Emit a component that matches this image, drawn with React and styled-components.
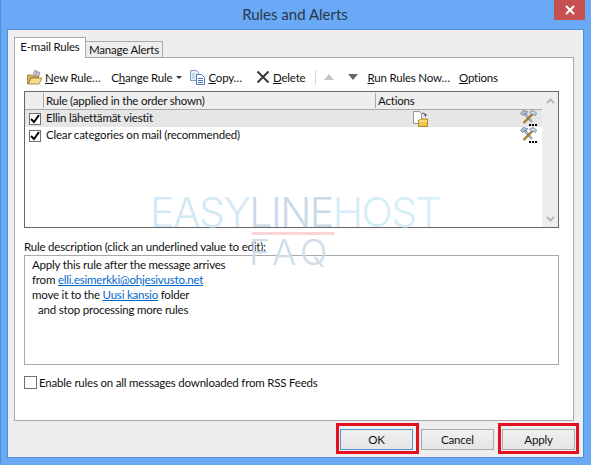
import React from "react";
import styled, { createGlobalStyle } from "styled-components";

const Global = createGlobalStyle`
  html, body { margin: 0; padding: 0; background: #69a9f5; overflow: hidden; }
  * { box-sizing: border-box; }
  u { text-underline-offset: 1px; text-decoration-thickness: 1px; }
`;

const Window = styled.div`
  position: relative;
  width: 591px;
  height: 465px;
  display: flex;
  flex-direction: column;
  background: #69a9f5;
  border-left: 1px solid #4f8fdc;
  font-family: Lato, "Open Sans", sans-serif;
  font-size: 11.5px;
  letter-spacing: -0.2px;
  color: #111;
`;
const TitleBar = styled.header`
  flex: 0 0 29px;
  display: grid;
  grid-template-columns: 1fr auto 1fr;
  align-items: start;
  padding-right: 6px;
`;
const Title = styled.div`
  grid-column: 2;
  font-size: 15px;
  letter-spacing: 0;
  line-height: 29px;
  color: #27384a;
  padding-left: 4px;
`;
const Close = styled.div`
  grid-column: 3;
  justify-self: end;
  width: 31px;
  height: 20px;
  background: #c75050;
  display: flex;
  align-items: center;
  justify-content: center;
`;
const Panel = styled.main`
  flex: 1;
  margin: 0 7px 7px 6px;
  background: #eeeeee;
  border: 1px solid #4f8fdc;
  padding: 7px 9px 0 6px;
  display: flex;
  flex-direction: column;
`;
const TabStrip = styled.nav`
  display: flex;
  align-items: flex-end;
  height: 21px;
  position: relative;
  z-index: 1;
  margin-bottom: -1px;
`;
const Tab = styled.div`
  border: 1px solid #a9a9a9;
  border-bottom: ${(p) => (p.$active ? "none" : "1px solid #a9a9a9")};
  border-left: ${(p) => (p.$active ? "1px solid #a9a9a9" : "none")};
  background: ${(p) => (p.$active ? "#fff" : "#eeeeee")};
  height: ${(p) => (p.$active ? "21px" : "17px")};
  width: ${(p) => (p.$active ? "72px" : "77px")};
  line-height: ${(p) => (p.$active ? "18px" : "16px")};
  text-align: center;
  white-space: nowrap;
`;
const TabBody = styled.section`
  height: 364px;
  background: #fff;
  border: 1px solid #a9a9a9;
  padding: 9px 14px 0 9px;
  display: flex;
  flex-direction: column;
`;
const Toolbar = styled.div`
  display: flex;
  align-items: center;
  height: 20px;
  padding-left: 3px;
`;
const ToolItem = styled.div`
  display: flex;
  align-items: center;
  white-space: nowrap;
  margin-left: ${(p) => p.$gap || 0}px;
  gap: ${(p) => p.$iconGap ?? 2}px;
`;
const Separator = styled.div`
  width: 1px;
  height: 15px;
  background: #d8d8d8;
  margin: 0 8px 0 10px;
`;
const RuleList = styled.div`
  margin-top: 4px;
  height: 137px;
  border: 1px solid #666;
  display: flex;
  flex-shrink: 0;
`;
const ListMain = styled.div`
  flex: 1;
  display: flex;
  flex-direction: column;
`;
const Header = styled.div`
  display: grid;
  grid-template-columns: 18px 332px 1fr;
  height: 18px;
  background: #eeeeee;
  border-bottom: 1px solid #a9a9a9;
  line-height: 15px;
`;
const HeaderCell = styled.div`
  border-left: ${(p) => (p.$plain ? "none" : "1px solid #a9a9a9")};
  padding-left: 2px;
  margin: 1px 0;
`;
const Row = styled.div`
  display: grid;
  grid-template-columns: 21px 329px 1fr;
  height: 17px;
  align-items: center;
  line-height: 15px;
  background: ${(p) => (p.$selected ? "#e6e6e6" : "#fff")};
`;
const RowText = styled.span`
  margin-top: -2px;
`;
const CheckBox = styled.div`
  width: 12px;
  height: 12px;
  margin-left: 4px;
  border: 1px solid #707070;
  background: #fff;
  display: flex;
  align-items: center;
  justify-content: center;
`;
const Actions = styled.div`
  display: flex;
  justify-content: ${(p) => (p.$both ? "space-between" : "flex-end")};
  align-items: center;
  padding: 0 5px 0 38px;
  height: 17px;
`;
const ScrollBar = styled.div`
  width: 16px;
  background: #eeeeee;
  display: flex;
  flex-direction: column;
  justify-content: space-between;
  align-items: center;
  padding: 6px 0 5px;
`;
const GroupLabel = styled.div`
  margin-top: 11px;
  line-height: 15px;
  height: 15px;
`;
const DescBox = styled.div`
  margin-top: 1px;
  height: 110px;
  border: 1px solid #a9a9a9;
  padding: 1px 0 0 7px;
  line-height: 15px;
`;
const DescLine = styled.div`
  padding-left: ${(p) => p.$indent || 0}px;
  height: 15px;
`;
const Link = styled.span`
  color: #0066cc;
  text-decoration: underline;
  text-underline-offset: 1px;
`;
const RssRow = styled.div`
  display: flex;
  align-items: center;
  margin-top: 11px;
  gap: 2px;
  height: 13px;
`;
const EmptyBox = styled.div`
  width: 13px;
  height: 13px;
  border: 1px solid #707070;
  background: #fff;
`;
const Footer = styled.footer`
  display: flex;
  justify-content: flex-end;
  gap: 8px;
  padding: 8px 0 0;
  margin-right: -1px;
`;
const Button = styled.div`
  position: relative;
  width: 73px;
  height: 21px;
  line-height: 19px;
  text-align: center;
  border: 1px solid ${(p) => (p.$default ? "#4d94d8" : "#acacac")};
  background: linear-gradient(#f0f0f0, #e5e5e5);
  color: #111;
  &::after {
    content: ${(p) => (p.$mark ? '""' : "none")};
    position: absolute;
    left: -5px;
    right: ${(p) => (p.$default ? "-7px" : "-5px")};
    top: -7px;
    bottom: -5px;
    border: 3px solid #e3111f;
  }
`;
const Watermark = styled.div`
  position: absolute;
  left: 149px;
  top: 187px;
  width: 300px;
  pointer-events: none;
  font-family: Inter, sans-serif;
  font-weight: 300;
  display: flex;
  flex-direction: column;
  align-items: flex-start;
`;
const MarkLine = styled.div`
  font-size: 41px;
  line-height: 50px;
  letter-spacing: -1.5px;
  white-space: nowrap;
`;
const MarkWord = styled.span`
  color: ${(p) => p.$c};
`;
const MarkRule = styled.div`
  width: 82px;
  height: 3px;
  margin: -5px 0 0 102px;
  background: #f9d5d8;
`;
const MarkFaq = styled.div`
  font-size: 36px;
  line-height: 36px;
  margin: -1px 0 0 99px;
  color: #cfdde8;
  letter-spacing: 5px;
`;

const FolderIcon = () => (
  <svg width="17" height="16" viewBox="0 0 17 16">
    <path d="M8 1l5 3-2 5-5-3z" fill="#cfd8e6" stroke="#7a88a8" strokeWidth=".8" />
    <path d="M9 3l2 1M8 4.500l2 1" stroke="#c44" strokeWidth=".7" />
    <path d="M.5 6h4l1 1h6v2H4L1.500 15H.5z" fill="#d9b45a" stroke="#8a6a20" strokeWidth=".7" />
    <path d="M4 9h11l-3 6H1.500z" fill="#f7dc8a" stroke="#9a7a28" strokeWidth=".8" />
  </svg>
);
const CopyIcon = () => (
  <svg width="15" height="15" viewBox="0 0 15 15">
    <path d="M.5.5h6l2 2v8h-8z" fill="#e4edf8" stroke="#7f9cc8" />
    <path d="M6.500 4.500h5l3 3v7h-8z" fill="#fff" stroke="#4a74b4" />
    <path d="M8 8.500h5M8 10.500h5M8 12.500h5" stroke="#4a74b4" />
    <path d="M2 4h3M2 6h3M2 8h3" stroke="#a8bcdc" />
  </svg>
);
const DeleteIcon = () => (
  <svg width="14" height="14" viewBox="0 0 14 14">
    <path d="M1.500 1.500l11 11M12.500 1.500l-11 11" stroke="#3a3a3a" strokeWidth="2" />
  </svg>
);
const Triangle = ({ down, color, w = 10, h = 6 }) => (
  <svg width={w} height={h} viewBox="0 0 10 6" preserveAspectRatio="none">
    <path d={down ? "M0 0h10L5 6z" : "M0 6h10L5 0z"} fill={color} />
  </svg>
);
const Chevron = ({ down }) => (
  <svg width="9" height="6" viewBox="0 0 9 6">
    <path d={down ? "M1 1l3.500 3.500L8 1" : "M1 5l3.500-3.500L8 5"} fill="none" stroke="#b8b8b8" strokeWidth="2" />
  </svg>
);
const CheckMark = () => (
  <svg width="10" height="10" viewBox="0 0 10 10">
    <path d="M1 5l3 3 5-7" fill="none" stroke="#000" strokeWidth="2" />
  </svg>
);
const MoveIcon = () => (
  <svg width="15" height="16" viewBox="0 0 15 16">
    <path d="M.5.500h6l2 2v10h-8z" fill="#fff" stroke="#8a9ab0" />
    <path d="M9 3c1.500-1.500 3-1 3.500 1" fill="none" stroke="#555" />
    <path d="M11.200 3.500h2.600L12.500 6z" fill="#333" />
    <path d="M5.500 9h2l1-1h6v7.500h-9z" fill="#f0c850" stroke="#b08a20" />
    <path d="M6 10h8" stroke="#fff0b0" />
  </svg>
);
const ToolsIcon = () => (
  <svg width="17" height="17" viewBox="0 0 17 17">
    <path d="M4 3l8 9" stroke="#7a8aa0" strokeWidth="2.400" fill="none" />
    <path d="M5 4l7.500 8.500" stroke="#e8ecf2" strokeWidth=".8" fill="none" />
    <path d="M13 3.500L3.500 13" stroke="#6a5210" strokeWidth="2.200" fill="none" />
    <path d="M13 3.500L3.500 13" stroke="#f0c040" strokeWidth=".9" fill="none" />
    <path d="M0.500 3.500L3 .5l4.500 1L6.500 4 4.500 3.500 3 5.500z" fill="#b4c4d8" stroke="#5c6c88" strokeWidth=".7" />
    <path d="M9.500 2L13 .5l3.500 2.500-1 2.500-2-1.500-2 .5z" fill="#d0dcea" stroke="#5c6c88" strokeWidth=".7" />
    <path d="M9 14h2v2H9zM12 14h2v2h-2zM15 14h2v2h-2z" fill="#000" />
  </svg>
);
const CloseIcon = () => (
  <svg width="10" height="10" viewBox="0 0 10 10">
    <path d="M1 1l8 8M9 1l-8 8" stroke="#fff" strokeWidth="2" />
  </svg>
);

export default function App() {
  return (
    <Window>
      <Global />
      <TitleBar>
        <Title>Rules and Alerts</Title>
        <Close><CloseIcon /></Close>
      </TitleBar>
      <Panel>
        <TabStrip>
          <Tab $active>E-mail Rules</Tab>
          <Tab>Manage Alerts</Tab>
        </TabStrip>
        <TabBody>
          <Toolbar>
            <ToolItem $iconGap={1}><FolderIcon /><span><u>N</u>ew Rule…</span></ToolItem>
            <ToolItem $gap={11} $iconGap={4}>
              <span>C<u>h</u>ange Rule</span><Triangle down color="#333" w={6} h={3} />
            </ToolItem>
            <ToolItem $gap={8} $iconGap={3}><CopyIcon /><span><u>C</u>opy…</span></ToolItem>
            <ToolItem $gap={14} $iconGap={3}><DeleteIcon /><span><u>D</u>elete</span></ToolItem>
            <Separator />
            <Triangle color="#c4c4c4" />
            <ToolItem $gap={14}><Triangle down color="#666" /></ToolItem>
            <ToolItem $gap={9}><span><u>R</u>un Rules Now…</span></ToolItem>
            <ToolItem $gap={9}><span><u>O</u>ptions</span></ToolItem>
          </Toolbar>
          <RuleList>
            <ListMain>
              <Header>
                <HeaderCell $plain />
                <HeaderCell>Rule (applied in the order shown)</HeaderCell>
                <HeaderCell>Actions</HeaderCell>
              </Header>
              <Row $selected>
                <CheckBox><CheckMark /></CheckBox>
                <RowText>Ellin lähettämät viestit</RowText>
                <Actions $both><MoveIcon /><ToolsIcon /></Actions>
              </Row>
              <Row>
                <CheckBox><CheckMark /></CheckBox>
                <RowText>Clear categories on mail (recommended)</RowText>
                <Actions><ToolsIcon /></Actions>
              </Row>
            </ListMain>
            <ScrollBar><Chevron /><Chevron down /></ScrollBar>
          </RuleList>
          <GroupLabel>Rule description (click an underlined value to edit):</GroupLabel>
          <DescBox>
            <DescLine>Apply this rule after the message arrives</DescLine>
            <DescLine>from <Link>elli.esimerkki@ohjesivusto.net</Link></DescLine>
            <DescLine>move it to the <Link>Uusi kansio</Link> folder</DescLine>
            <DescLine $indent={6}>and stop processing more rules</DescLine>
          </DescBox>
          <RssRow>
            <EmptyBox />
            <span>Enable rules on all messages downloaded from RSS Feeds</span>
          </RssRow>
        </TabBody>
        <Footer>
          <Button $default $mark>OK</Button>
          <Button>Cancel</Button>
          <Button $mark>Apply</Button>
        </Footer>
      </Panel>
      <Watermark>
        <MarkLine>
          <MarkWord $c="#d3e9f5">EASY</MarkWord>
          <MarkWord $c="#c9d9e8">LINE</MarkWord>
          <MarkWord $c="#d5eef8">HOST</MarkWord>
        </MarkLine>
        <MarkRule />
        <MarkFaq>FAQ</MarkFaq>
      </Watermark>
    </Window>
  );
}
